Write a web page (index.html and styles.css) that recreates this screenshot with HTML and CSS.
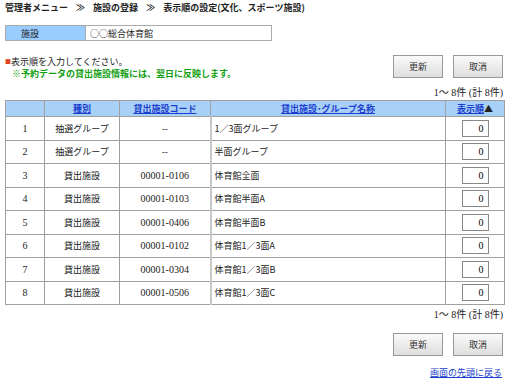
FILE: index.html
```html
<html>
	<head>
		<title>表示順の設定</title>
		<link rel="stylesheet" href="styles.css">
	</head>
	<body>
		<div class="crumb">管理者メニュー <span class="sep">≫</span> 施設の登録 <span class="sep">≫</span> 表示順の設定(文化、スポーツ施設)</div>
		<table class="facility">
			<tr>
				<th>施設</th>
				<td>○○総合体育館</td>
			</tr>
		</table>
		<div class="toolbar">
			<div class="notes">
				<p class="note"><span class="mark">■</span>表示順を入力してください。</p>
				<p class="warn">※予約データの貸出施設情報には、翌日に反映します。</p>
			</div>
			<div class="buttons">
				<button>更新</button>
				<button>取消</button>
			</div>
		</div>
		<div class="count">1～ 8件 (計 8件)</div>
		<table class="list">
			<tr>
				<th class="no"></th>
				<th class="kind"><a href="#">種別</a></th>
				<th class="code"><a href="#">貸出施設コード</a></th>
				<th class="name"><a href="#">貸出施設･グループ名称</a></th>
				<th class="order"><a href="#">表示順</a>▲</th>
			</tr>
			<tr>
				<td class="num">1</td><td>抽選グループ</td><td>--</td><td class="left">1／3面グループ</td>
				<td><input class="ord" type="text" value="0"></td>
			</tr>
			<tr>
				<td class="num">2</td><td>抽選グループ</td><td>--</td><td class="left">半面グループ</td>
				<td><input class="ord" type="text" value="0"></td>
			</tr>
			<tr>
				<td class="num">3</td><td>貸出施設</td><td class="num">00001-0106</td><td class="left">体育館全面</td>
				<td><input class="ord" type="text" value="0"></td>
			</tr>
			<tr>
				<td class="num">4</td><td>貸出施設</td><td class="num">00001-0103</td><td class="left">体育館半面A</td>
				<td><input class="ord" type="text" value="0"></td>
			</tr>
			<tr>
				<td class="num">5</td><td>貸出施設</td><td class="num">00001-0406</td><td class="left">体育館半面B</td>
				<td><input class="ord" type="text" value="0"></td>
			</tr>
			<tr>
				<td class="num">6</td><td>貸出施設</td><td class="num">00001-0102</td><td class="left">体育館1／3面A</td>
				<td><input class="ord" type="text" value="0"></td>
			</tr>
			<tr>
				<td class="num">7</td><td>貸出施設</td><td class="num">00001-0304</td><td class="left">体育館1／3面B</td>
				<td><input class="ord" type="text" value="0"></td>
			</tr>
			<tr>
				<td class="num">8</td><td>貸出施設</td><td class="num">00001-0506</td><td class="left">体育館1／3面C</td>
				<td><input class="ord" type="text" value="0"></td>
			</tr>
		</table>
		<div class="count after">1～ 8件 (計 8件)</div>
		<div class="buttons bottom">
			<button>更新</button>
			<button>取消</button>
		</div>
		<div class="toplink"><a href="#">画面の先頭に戻る</a></div>
	</body>
</html>
```

FILE: styles.css
```css
html{
	font-family: "Noto Sans CJK JP", "Noto Sans", sans-serif;
	font-size: 9px;
	color: #222222;
}
body{
	margin: 0;
	padding: 2px 8px 0 5px;
	background: white;
}
table,input,button{
	font-size: 9px;
	line-height: normal;
}
a{
	color: #1a3fcc;
}
.crumb{
	font-weight: bold;
	height: 14px;
	line-height: 12px;
	white-space: nowrap;
}
.crumb .sep{
	margin: 0 6px;
}
.facility{
	margin-top: 9px;
	border-collapse: collapse;
	width: 267px;
}
.facility th,.facility td{
	border: 1px solid #aaaaaa;
	height: 15px;
	padding: 0;
	font-weight: normal;
	text-align: left;
}
.facility th{
	width: 64px;
	padding-left: 15px;
	background-color: #99ccff;
}
.facility td{
	padding-left: 4px;
}
.toolbar{
	display: flex;
	justify-content: space-between;
	margin-top: 14px;
}
.notes{
	padding-top: 1px;
}
.notes p{
	margin: 0;
	line-height: 12px;
}
.note .mark{
	color: #dd4422;
	font-size: 6px;
	vertical-align: 1px;
}
.warn{
	padding-left: 7px;
	color: #11a011;
	font-weight: bold;
}
.buttons{
	display: flex;
	gap: 10px;
	padding-right: 1px;
}
.bottom{
	justify-content: flex-end;
	margin-top: 12px;
}
button{
	width: 50px;
	height: 23px;
	padding: 0;
	font-family: inherit;
	color: #333333;
	background: linear-gradient(#fafafa, #dedede);
	border: 1px solid #999999;
}
.count{
	text-align: right;
	font-family: "Liberation Serif", "Noto Sans CJK JP", serif;
	font-size: 10px;
	height: 12px;
	line-height: 12px;
	margin-top: 7px;
	padding-right: 1px;
}
.count.after{
	margin-top: 4px;
}
.list{
	margin-top: 1px;
	width: 500px;
	border-collapse: collapse;
}
.list th,.list td{
	border: 1px solid #a0a0a0;
	padding: 0;
	text-align: center;
	white-space: nowrap;
}
.list th{
	height: 16px;
	background-color: #a9d0f7;
	font-weight: bold;
}
.list td{
	height: 23.5px;
}
.list .no{ width: 38px; }
.list .kind{ width: 74px; }
.list .code{ width: 90px; }
.list .order{ width: 58px; }
.list td.left{
	text-align: left;
	padding-left: 3px;
	border-left: 2px solid #c8c8c8;
}
.list td.num{
	font-family: "Liberation Serif", serif;
	font-size: 10px;
}
.ord{
	width: 27px;
	height: 17px;
	padding: 0 4px 0 0;
	text-align: right;
	font-family: "Liberation Serif", serif;
	font-size: 10px;
	border: 1px solid #888888;
	box-sizing: border-box;
}
.toplink{
	text-align: right;
	margin-top: 10px;
	padding-right: 2px;
}
```
